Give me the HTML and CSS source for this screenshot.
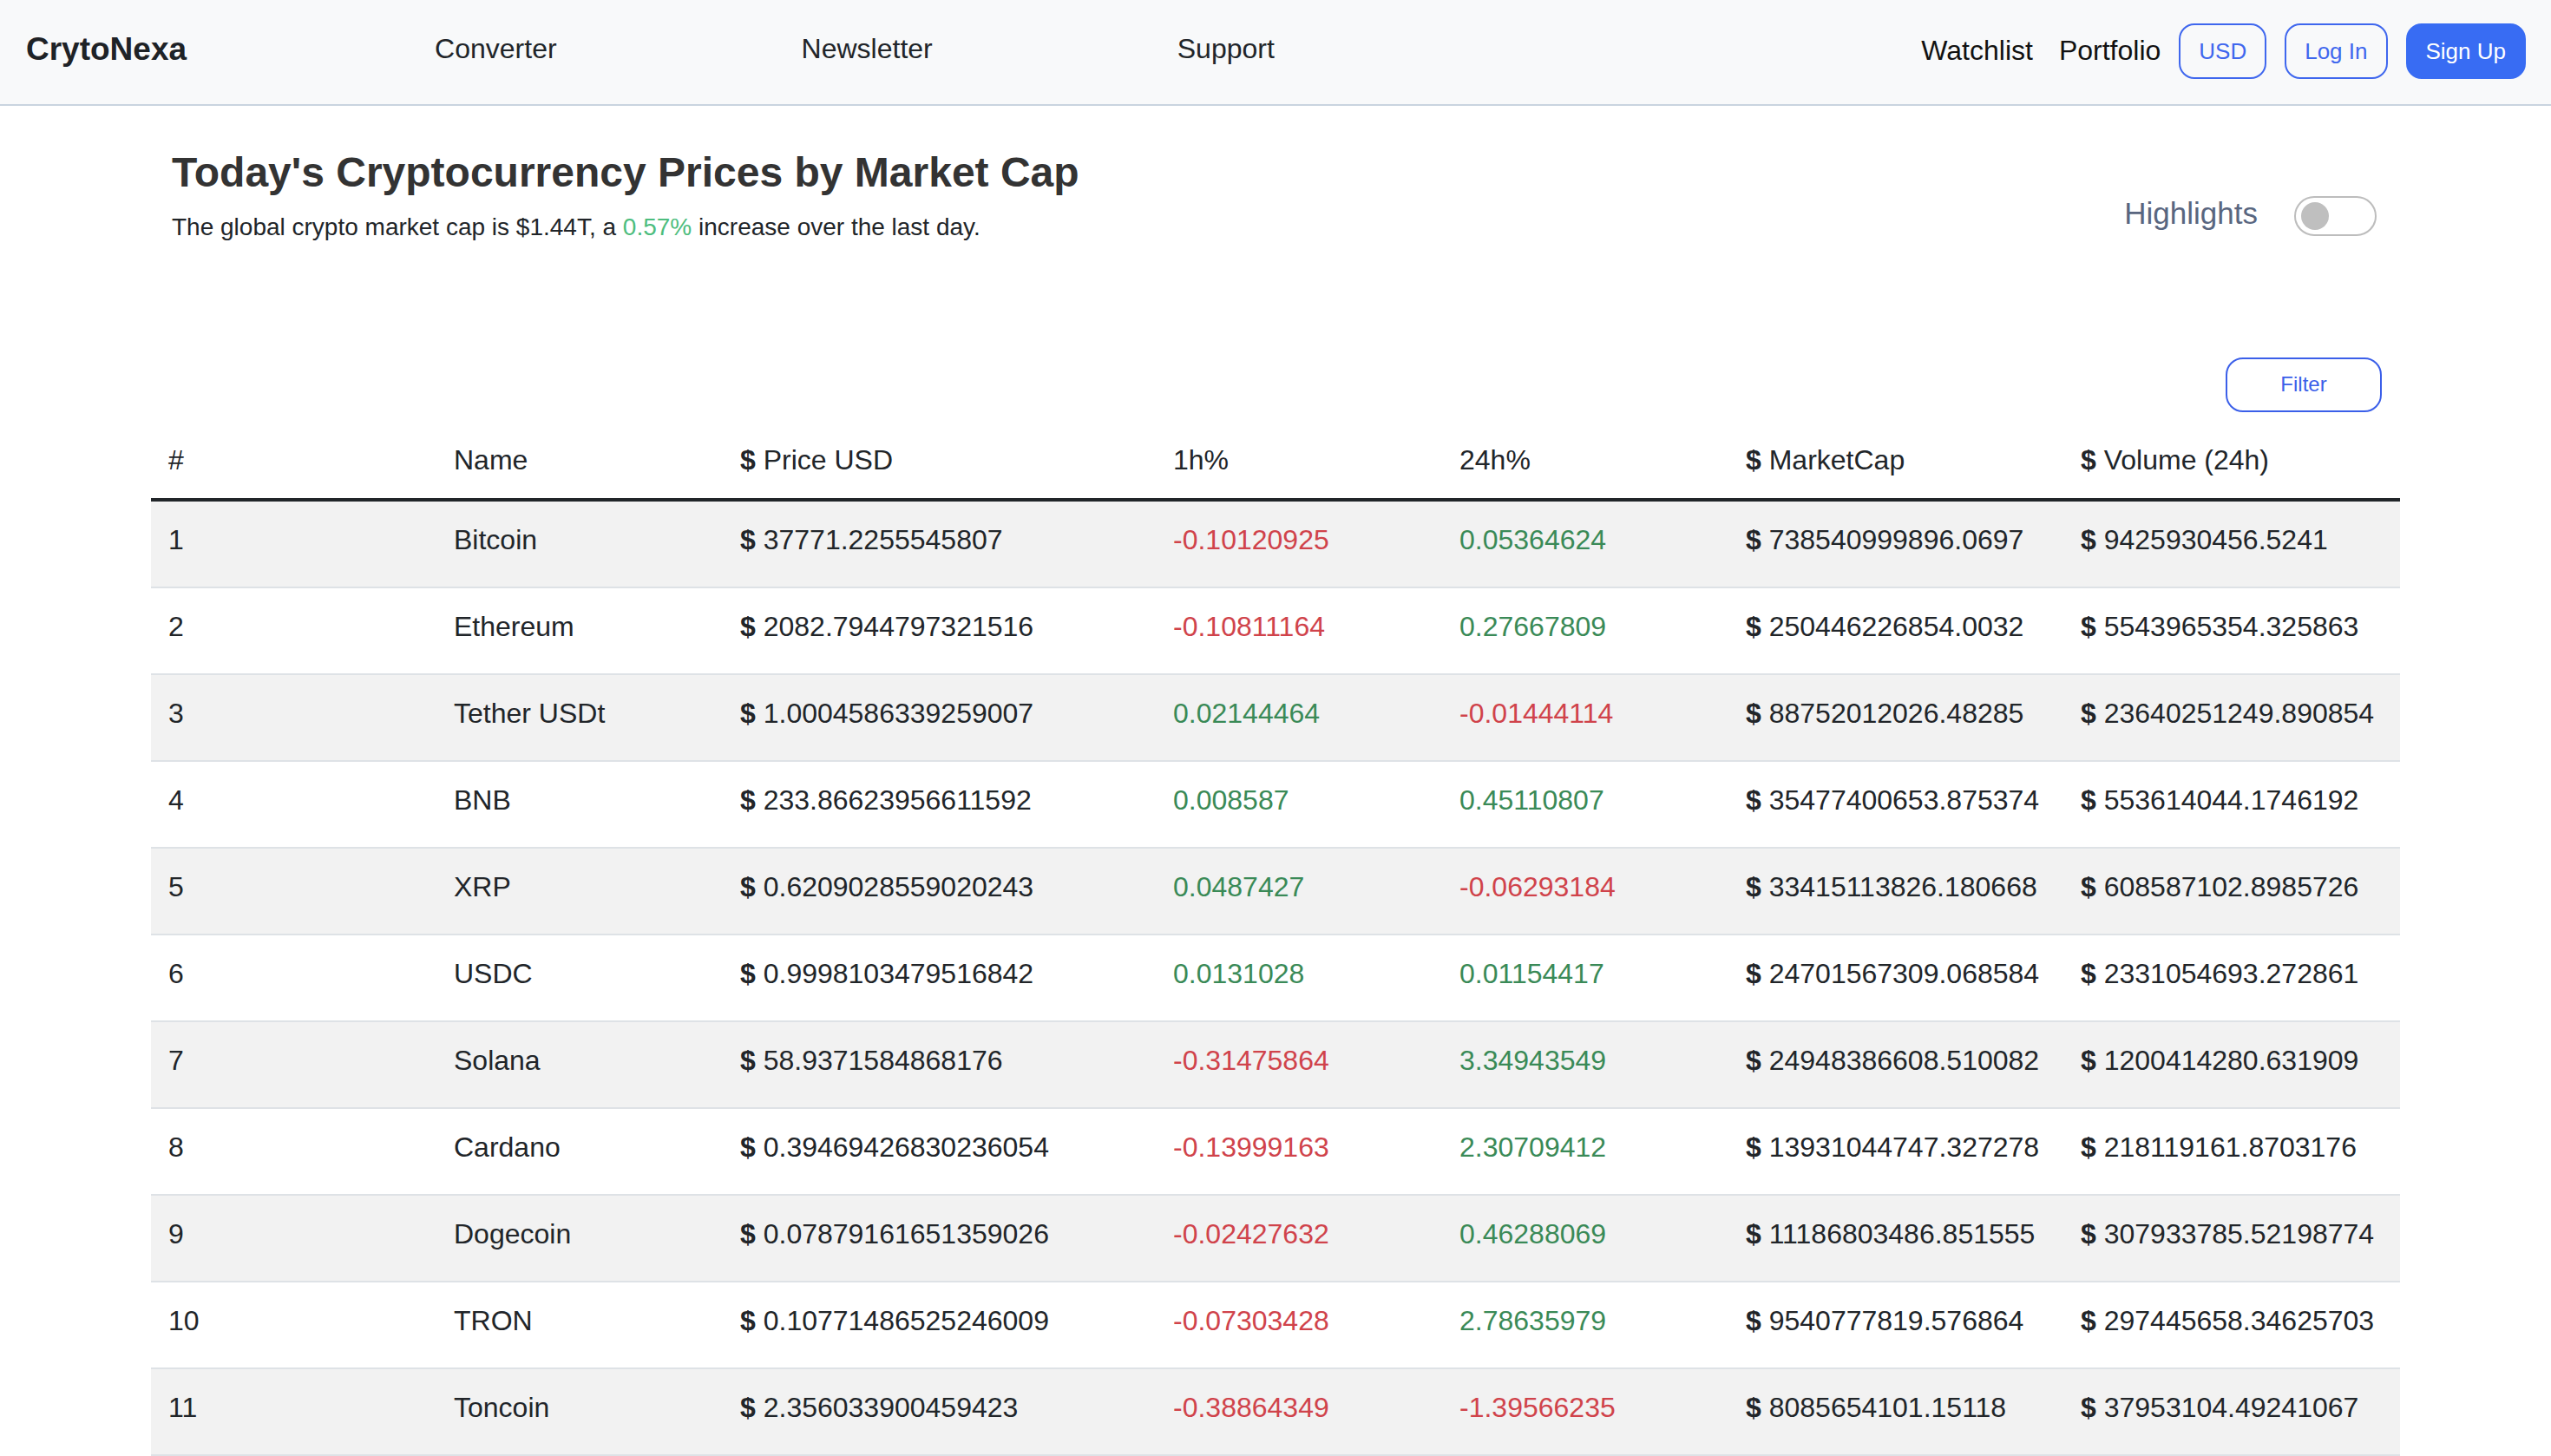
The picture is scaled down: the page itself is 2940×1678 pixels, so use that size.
FILE: index.html
```html
<!DOCTYPE html>
<html lang="en">
<head>
<meta charset="utf-8">
<title>CrytoNexa</title>
<link rel="stylesheet" href="styles.css">
</head>
<body>
<header class="navbar">
  <a class="brand" href="#">CrytoNexa</a>
  <ul class="nav-links">
    <li><a href="#">Converter</a></li>
    <li><a href="#">Newsletter</a></li>
    <li><a href="#">Support</a></li>
  </ul>
  <div class="nav-right">
    <a class="nav-plain watch" href="#">Watchlist</a>
    <a class="nav-plain" href="#">Portfolio</a>
    <button class="btn btn-outline">USD</button>
    <button class="btn btn-outline">Log In</button>
    <button class="btn btn-solid">Sign Up</button>
  </div>
</header>

<main class="main">
  <section class="intro">
    <div class="intro-text">
      <h1 class="title">Today's Cryptocurrency Prices by Market Cap</h1>
      <p class="subtitle">The global crypto market cap is $1.44T, a <span class="up">0.57%</span> increase over the last day.</p>
    </div>
    <div class="highlights">
      <span class="highlights-label">Highlights</span>
      <span class="toggle"><span class="knob"></span></span>
    </div>
  </section>

  <div class="filter-row">
    <button class="filter-btn">Filter</button>
  </div>

  <table class="coins">
    <colgroup>
      <col class="c-rank"><col class="c-name"><col class="c-price"><col class="c-h1"><col class="c-h24"><col class="c-cap"><col class="c-vol">
    </colgroup>
    <thead>
      <tr>
        <th>#</th>
        <th>Name</th>
        <th><b class="usd">$</b> Price USD</th>
        <th>1h%</th>
        <th>24h%</th>
        <th><b class="usd">$</b> MarketCap</th>
        <th><b class="usd">$</b> Volume (24h)</th>
      </tr>
    </thead>
    <tbody>
      <tr><td>1</td><td>Bitcoin</td><td><b class="usd">$</b> 37771.2255545807</td><td class="neg">-0.10120925</td><td class="pos">0.05364624</td><td><b class="usd">$</b> 738540999896.0697</td><td><b class="usd">$</b> 9425930456.5241</td></tr>
      <tr><td>2</td><td>Ethereum</td><td><b class="usd">$</b> 2082.7944797321516</td><td class="neg">-0.10811164</td><td class="pos">0.27667809</td><td><b class="usd">$</b> 250446226854.0032</td><td><b class="usd">$</b> 5543965354.325863</td></tr>
      <tr><td>3</td><td>Tether USDt</td><td><b class="usd">$</b> 1.0004586339259007</td><td class="pos">0.02144464</td><td class="neg">-0.01444114</td><td><b class="usd">$</b> 88752012026.48285</td><td><b class="usd">$</b> 23640251249.890854</td></tr>
      <tr><td>4</td><td>BNB</td><td><b class="usd">$</b> 233.86623956611592</td><td class="pos">0.008587</td><td class="pos">0.45110807</td><td><b class="usd">$</b> 35477400653.875374</td><td><b class="usd">$</b> 553614044.1746192</td></tr>
      <tr><td>5</td><td>XRP</td><td><b class="usd">$</b> 0.6209028559020243</td><td class="pos">0.0487427</td><td class="neg">-0.06293184</td><td><b class="usd">$</b> 33415113826.180668</td><td><b class="usd">$</b> 608587102.8985726</td></tr>
      <tr><td>6</td><td>USDC</td><td><b class="usd">$</b> 0.9998103479516842</td><td class="pos">0.0131028</td><td class="pos">0.01154417</td><td><b class="usd">$</b> 24701567309.068584</td><td><b class="usd">$</b> 2331054693.272861</td></tr>
      <tr><td>7</td><td>Solana</td><td><b class="usd">$</b> 58.9371584868176</td><td class="neg">-0.31475864</td><td class="pos">3.34943549</td><td><b class="usd">$</b> 24948386608.510082</td><td><b class="usd">$</b> 1200414280.631909</td></tr>
      <tr><td>8</td><td>Cardano</td><td><b class="usd">$</b> 0.39469426830236054</td><td class="neg">-0.13999163</td><td class="pos">2.30709412</td><td><b class="usd">$</b> 13931044747.327278</td><td><b class="usd">$</b> 218119161.8703176</td></tr>
      <tr><td>9</td><td>Dogecoin</td><td><b class="usd">$</b> 0.07879161651359026</td><td class="neg">-0.02427632</td><td class="pos">0.46288069</td><td><b class="usd">$</b> 11186803486.851555</td><td><b class="usd">$</b> 307933785.52198774</td></tr>
      <tr><td>10</td><td>TRON</td><td><b class="usd">$</b> 0.10771486525246009</td><td class="neg">-0.07303428</td><td class="pos">2.78635979</td><td><b class="usd">$</b> 9540777819.576864</td><td><b class="usd">$</b> 297445658.34625703</td></tr>
      <tr><td>11</td><td>Toncoin</td><td><b class="usd">$</b> 2.356033900459423</td><td class="neg">-0.38864349</td><td class="neg">-1.39566235</td><td><b class="usd">$</b> 8085654101.15118</td><td><b class="usd">$</b> 37953104.49241067</td></tr>
    </tbody>
  </table>
</main>
</body>
</html>
```

FILE: styles.css
```css
* { box-sizing: border-box; }

html, body {
  margin: 0;
  padding: 0;
  background: #ffffff;
}

body {
  font-family: "Liberation Sans", Arial, Helvetica, sans-serif;
  color: #212529;
  font-size: 32px;
  line-height: 1.5;
}

a { color: inherit; text-decoration: none; }

/* ---------- navbar ---------- */
.navbar {
  display: flex;
  align-items: center;
  height: 122px;
  padding: 0 29px 2px 30px;
  background: #f8f9fa;
  border-bottom: 2px solid #c9d4df;
}

.brand {
  font-size: 37px;
  font-weight: 700;
  color: #1e2226;
  line-height: 1;
  margin-top: -6px;
}

.nav-links {
  display: flex;
  gap: 282px;
  margin: -6px 0 0 286px;
  padding: 0;
  list-style: none;
  font-size: 32px;
  line-height: 1;
}

.nav-links a { color: #212529; }

.nav-right {
  margin-left: auto;
  display: flex;
  align-items: center;
  gap: 21px;
}

.nav-plain {
  font-size: 32px;
  color: #111;
  line-height: 1;
  margin-top: -2px;
}

.nav-plain.watch { margin-right: 9px; }

.btn {
  height: 64px;
  padding: 0 21px;
  border: 2px solid #3f67ee;
  border-radius: 18px;
  font-family: inherit;
  font-size: 26px;
  line-height: 1;
  background: transparent;
  cursor: pointer;
}

.btn-outline { color: #3f67ee; }

.btn-solid {
  background: #386cf3;
  border-color: #386cf3;
  color: #ffffff;
}

/* ---------- main ---------- */
.main {
  padding: 0 174px;
}

.intro {
  display: flex;
  justify-content: space-between;
  align-items: flex-start;
  padding: 48px 27px 0 24px;
}

.title {
  margin: 0;
  font-size: 48px;
  line-height: 1.2;
  font-weight: 700;
  color: #333333;
}

.subtitle {
  margin: 13px 0 0;
  font-size: 28px;
  line-height: 42px;
  color: #212529;
}

.up { color: #4dbd7e; }

.highlights {
  display: flex;
  align-items: center;
  gap: 42px;
  margin-top: 56px;
  height: 46px;
}

.highlights-label {
  font-size: 35px;
  line-height: 1;
  color: #596680;
  margin-top: -8px;
}

.toggle {
  position: relative;
  width: 95px;
  height: 46px;
  border: 2px solid #bdbdbd;
  border-radius: 23px;
  background: #ffffff;
}

.knob {
  position: absolute;
  left: 6px;
  top: 5px;
  width: 32px;
  height: 32px;
  border-radius: 50%;
  background: #bfbfbf;
}

.filter-row {
  display: flex;
  justify-content: flex-end;
  padding-right: 21px;
  margin-top: 129px;
}

.filter-btn {
  width: 180px;
  height: 63px;
  border: 2px solid #3b5fe9;
  border-radius: 20px;
  background: #ffffff;
  color: #3b5fe9;
  font-family: inherit;
  font-size: 24px;
  cursor: pointer;
}

/* ---------- table ---------- */
.coins {
  width: 100%;
  border-collapse: collapse;
  table-layout: fixed;
  margin-top: 2px;
}

.c-rank { width: 329px; }
.c-name { width: 330px; }
.c-price { width: 499px; }
.c-h1 { width: 330px; }
.c-h24 { width: 330px; }
.c-cap { width: 386px; }
.c-vol { width: 388px; }

.coins th,
.coins td {
  padding: 19.7px 20px 30.3px;
  font-size: 32px;
  line-height: 48px;
  font-weight: 400;
  text-align: left;
  white-space: nowrap;
  color: #212529;
}

.coins thead th {
  padding: 29px 20px 20.6px;
  border-bottom: 4px solid #212529;
}

.coins tbody td {
  border-bottom: 2px solid #dee2e6;
}

.coins tbody tr:nth-child(odd) td {
  background: #f2f2f2;
}

.usd { font-weight: 700; }

.coins td.neg { color: #d0434b; }
.coins td.pos { color: #3a8a57; }
```
